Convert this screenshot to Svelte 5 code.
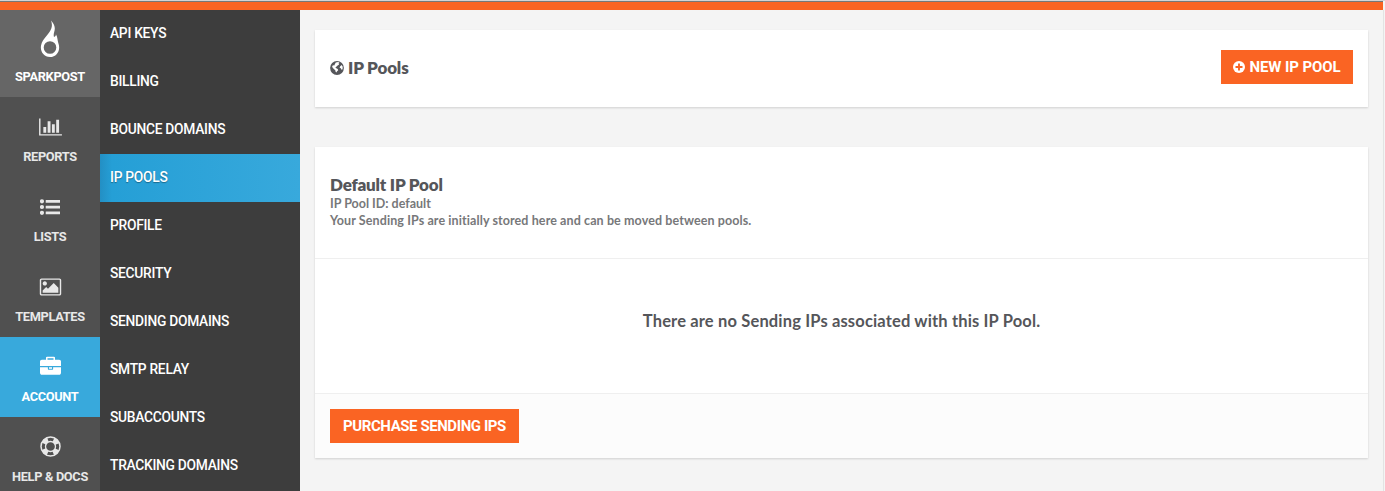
<script>
  const nav = [
    { label: 'REPORTS', icon: 'chart' },
    { label: 'LISTS', icon: 'list' },
    { label: 'TEMPLATES', icon: 'picture' },
    { label: 'ACCOUNT', icon: 'case', active: true },
    { label: 'HELP & DOCS', icon: 'ring' }
  ];
  const menu = ['API KEYS', 'BILLING', 'BOUNCE DOMAINS', 'IP POOLS', 'PROFILE', 'SECURITY', 'SENDING DOMAINS', 'SMTP RELAY', 'SUBACCOUNTS', 'TRACKING DOMAINS'];
</script>

<div class="page">
  <div class="topbar"></div>
  <div class="body">
    <nav class="rail">
      <div class="brand">
        <svg width="20" height="38" viewBox="0 0 20 38">
          <path fill="#fff" fill-rule="evenodd" d="M11 .4C15.2 5 15.3 8.600 14.200 12C13.700 13.800 13.500 15.300 14 17C15.600 16.500 16 15.500 15.900 14.200C17.800 17.500 17.300 20 18.300 23C21 30 17 37 10 37C3.500 37-.2 31 1.100 25.200C2.500 18.500 9.500 14 11.300 8.500C12.300 5.500 12 3 11 .4ZM10 21.200a6.300 6.300 0 1 0 0 12.600a6.300 6.300 0 1 0 0-12.600Z" />
        </svg>
        <span>SPARKPOST</span>
      </div>
      {#each nav as item}
        <div class="item" class:active={item.active}>
          <div class="icon">
            {#if item.icon === 'chart'}
              <svg width="23" height="20" viewBox="0 0 2048 1792"><path d="M640 896v512H384V896h256zm384-512v1024H768V384h256zm1024 1152v128H0V128h128v1408h1920zM1408 640v768h-256V640h256zm384-384v1152h-256V256h256z" /></svg>
            {:else if item.icon === 'list'}
              <svg width="20" height="16" viewBox="0 0 20 16"><circle cx="2" cy="2.300" r="2.100" /><circle cx="2" cy="8" r="2.100" /><circle cx="2" cy="13.800" r="2.100" /><rect x="5.700" y="1" width="14.600" height="2.800" rx=".3" /><rect x="5.700" y="6.700" width="14.600" height="2.800" rx=".3" /><rect x="5.700" y="12.400" width="14.600" height="2.800" rx=".3" /></svg>
            {:else if item.icon === 'picture'}
              <svg width="23" height="20" viewBox="0 0 2048 1792"><path d="M704 576q0 80-56 136t-136 56-136-56-56-136 56-136 136-56 136 56 56 136zm1024 384v448H320v-192l320-320 160 160 512-512zm96-704H224q-13 0-22.500 9.500T192 288v1216q0 13 9.500 22.500t22.500 9.500h1600q13 0 22.500-9.500t9.500-22.500V288q0-13-9.500-22.500T1824 256zm160 32v1216q0 66-47 113t-113 47H224q-66 0-113-47t-47-113V288q0-66 47-113t113-47h1600q66 0 113 47t47 113z" /></svg>
            {:else if item.icon === 'case'}
              <svg width="21" height="21" viewBox="0 -60 1792 1792"><path d="M640 256h512V128H640v128zm1152 640v480q0 66-47 113t-113 47H160q-66 0-113-47T0 1376V896h672v160q0 26 19 45t45 19h320q26 0 45-19t19-45V896h672zm-768 0v128H768V896h256zm768-480v384H0V416q0-66 47-113t113-47h352V96q0-40 28-68t68-28h576q40 0 68 28t28 68v160h352q66 0 113 47t47 113z" /></svg>
            {:else}
              <svg class="ring" width="21" height="21" viewBox="0 0 21 21"><circle cx="10.500" cy="10.500" r="9.500" stroke-width="1.500" /><circle cx="10.500" cy="10.500" r="5" stroke-width="1.300" /><circle cx="10.500" cy="10.500" r="7.200" stroke-width="4.600" stroke-dasharray="5.655 5.655" stroke-dashoffset="-2.830" /></svg>
            {/if}
          </div>
          <span>{item.label}</span>
        </div>
      {/each}
    </nav>
    <nav class="menu">
      {#each menu as label}
        <div class="entry" class:selected={label === 'IP POOLS'}>{label}</div>
      {/each}
    </nav>
    <main>
      <section class="card head">
        <h1>
          <svg width="14" height="14" viewBox="0 0 14 14"><circle cx="7" cy="7" r="6.900" fill="#55565a" /><path fill="#fff" d="M5.800 1.500L8.300 1L9.600 1.900L8.500 2.600L9.100 3.600L7.600 4.600L6.300 5.800L5.400 6.600L6.300 7.300L7.700 8L8.200 9.200L7.100 10.200L6.300 11.600L5.600 10.800L5.300 9.200L3.800 8L2.500 6.600L2.100 5L3.300 4.200L4.300 4.500L4.800 3.200ZM10.200 5.200L11.700 4L12.700 5.800L12.600 8.200L11.500 8.800L10.800 7.300L9.600 6.700Z" /></svg>
          <span>IP Pools</span>
        </h1>
        <button class="new">
          <svg width="12" height="12" viewBox="0 0 12 12"><circle cx="6" cy="6" r="6" fill="#fff" /><path d="M6 2.500v7M2.500 6h7" stroke="#fa6423" stroke-width="1.900" /></svg>
          <span>NEW IP POOL</span>
        </button>
      </section>
      <section class="card pool">
        <header>
          <h2>Default IP Pool</h2>
          <p class="id">IP Pool ID: default</p>
          <p class="desc">Your Sending IPs are initially stored here and can be moved between pools.</p>
        </header>
        <div class="empty"><span>There are no Sending IPs associated with this IP Pool.</span></div>
        <footer><button class="buy">PURCHASE SENDING IPS</button></footer>
      </section>
    </main>
  </div>
</div>

<style>
  :global(body) { margin: 0; overflow: hidden; }
  .page { width: 1385px; height: 491px; box-sizing: border-box; overflow: hidden; background: #f4f4f4; font-family: Lato, "Liberation Sans", sans-serif; display: flex; flex-direction: column; border-top: 1px solid #d4d4d4; }
  .topbar { height: 8px; flex: none; margin-right: 2px; border-top: 1px solid #777; background: #fa6423; }
  .body { display: flex; flex: 1; min-height: 0; margin-right: 1px; border-right: 1px solid #e3e3e3; }
  .rail { width: 100px; flex: none; background: #505050; color: #e8e8e8; font: 700 12.800px/16px Roboto, sans-serif; letter-spacing: -.33px; }
  .rail span { display: block; text-align: center; white-space: nowrap; }
  .brand { height: 87px; box-sizing: border-box; padding-top: 10px; background: #666; color: #fff; display: flex; flex-direction: column; align-items: center; }
  .brand span { margin-top: 11px; }
  .item { height: 80px; display: flex; flex-direction: column; align-items: center; }
  .icon { height: 21px; margin: 19px 0 12px; display: flex; align-items: center; }
  .icon svg { fill: #e8e8e8; }
  .icon .ring { fill: none; stroke: #e8e8e8; }
  .item.active { background: #38a9dc; color: #fff; }
  .active .icon svg { fill: #fff; }
  .menu { width: 200px; flex: none; background: #3d3d3d; color: #fff; font: 500 13.800px/47px Roboto, sans-serif; letter-spacing: -.28px; }
  .entry { height: 48px; padding-left: 10px; white-space: nowrap; }
  .selected { background: linear-gradient(90deg, #238fc4 0, #259fd6 12px, #38a9dc 100%); text-shadow: 0 1px 1px rgba(0, 0, 0, .35); }
  main { flex: 1; padding: 20px 15px 0; display: flex; flex-direction: column; gap: 40px; color: #55565a; }
  .card { background: #fff; box-shadow: 0 1px 2px rgba(0, 0, 0, .15); }
  .head { height: 77px; box-sizing: border-box; padding: 0 15px 1px; display: flex; align-items: center; justify-content: space-between; }
  h1, h2, p { margin: 0; white-space: nowrap; }
  h1 { font-size: 17px; line-height: 20px; font-weight: 800; letter-spacing: -.15px; display: flex; align-items: center; gap: 4px; }
  h2 { font-size: 17px; line-height: 20px; font-weight: 800; letter-spacing: -.2px; }
  button { border: 0; padding: 0; height: 34px; background: #fa6423; color: #fff; font: 700 15px/34px Roboto, sans-serif; display: flex; align-items: center; justify-content: center; white-space: nowrap; }
  .new { width: 132px; gap: 4px; letter-spacing: -.1px; margin-bottom: 2px; }
  .buy { width: 189px; letter-spacing: -.43px; }
  header { height: 112px; box-sizing: border-box; padding: 28px 15px 0; border-bottom: 1px solid #efefef; }
  p { font-size: 12.500px; line-height: 17px; font-weight: 700; color: #77787a; }
  .desc { letter-spacing: .1px; }
  .empty { height: 135px; box-sizing: border-box; padding-bottom: 11px; display: flex; align-items: center; justify-content: center; border-bottom: 1px solid #efefef; font-size: 16.500px; font-weight: 700; letter-spacing: .15px; }
  footer { height: 64px; box-sizing: border-box; padding: 15px; background: #fcfcfc; }
</style>
